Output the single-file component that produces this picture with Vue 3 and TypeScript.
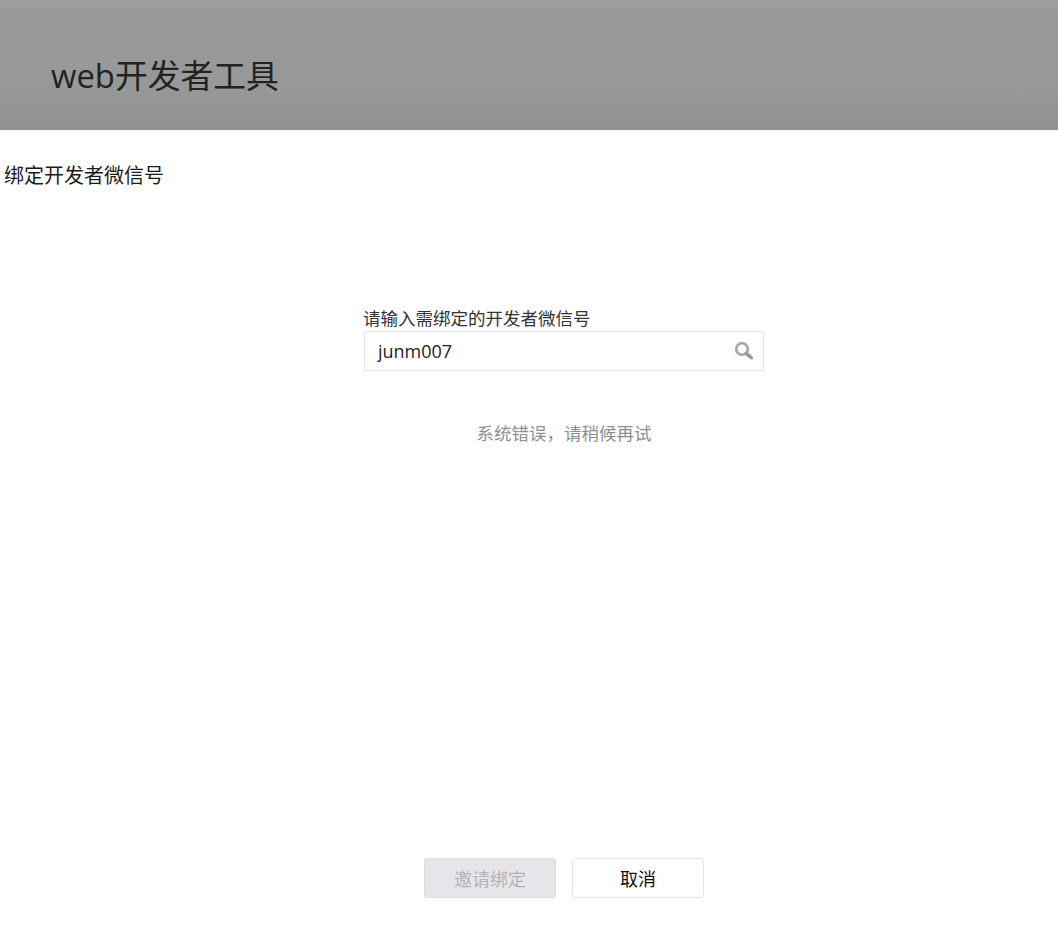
<script setup lang="ts">
const title: string = '绑定开发者微信号'
</script>

<template>
  <div class="page">
    <header class="head">
      <h1 class="brand">web开发者工具</h1>
    </header>
    <h2 class="title">{{ title }}</h2>
    <section class="form">
      <label class="label">请输入需绑定的开发者微信号</label>
      <div class="search">
        <span class="value">junm007</span>
        <svg class="icon" width="20" height="20" viewBox="0 0 20 20" fill="none">
          <circle cx="8" cy="8" r="5.8" stroke="#a8a8a8" stroke-width="2.8" />
          <path d="M12.6 12.6L17.4 16.8" stroke="#999" stroke-width="3.4" stroke-linecap="round" />
        </svg>
      </div>
      <p class="error">系统错误，请稍候再试</p>
    </section>
    <footer class="actions">
      <button class="btn disabled" type="button">邀请绑定</button>
      <button class="btn" type="button">取消</button>
    </footer>
  </div>
</template>

<style>
html, body { margin: 0; background: #fff; }
</style>

<style scoped>
.page {
  height: 939px;
  overflow: hidden;
  display: flex;
  flex-direction: column;
  font-family: "Open Sans", "Noto Sans CJK SC", sans-serif;
  color: #1a1a1a;
}
.head {
  height: 130px;
  box-sizing: border-box;
  padding: 21px 0 0 51px;
  display: flex;
  align-items: center;
  background: linear-gradient(#9d9d9d 0, #9c9c9c 9px, #989a99 10px, #979998 90px, #8f908f 130px);
}
.brand {
  margin: 0;
  font-size: 32.8px;
  font-weight: 400;
  line-height: 44px;
  color: #222;
}
.title {
  margin: 31px 0 0 4px;
  font-size: 20px;
  font-weight: 400;
  line-height: 30px;
}
.form {
  width: 400px;
  margin: 114px auto 0 364px;
  display: flex;
  flex-direction: column;
}
.label {
  margin-left: -1px;
  font-size: 17.5px;
  line-height: 26px;
  color: #333;
}
.search {
  height: 40px;
  box-sizing: border-box;
  border: 1px solid #e5e5e5;
  padding: 0 9px 0 13px;
  display: flex;
  align-items: center;
  justify-content: space-between;
}
.value {
  font-size: 18px;
  color: #222;
}
.error {
  margin: 49px 0 0;
  text-align: center;
  font-size: 17.5px;
  line-height: 26px;
  color: #8f8f8f;
}
.actions {
  margin-top: auto;
  margin-bottom: 41px;
  display: flex;
  justify-content: center;
  gap: 16px;
  padding-left: 70px;
}
.btn {
  width: 132px;
  height: 40px;
  border: 1px solid #e5e5e5;
  border-radius: 3px;
  background: #fff;
  font-family: inherit;
  font-size: 18px;
  color: #111;
  padding: 0;
}
.btn.disabled {
  background: #e6e6ea;
  border-color: #dcdcdf;
  color: #b3b3b3;
}
</style>
